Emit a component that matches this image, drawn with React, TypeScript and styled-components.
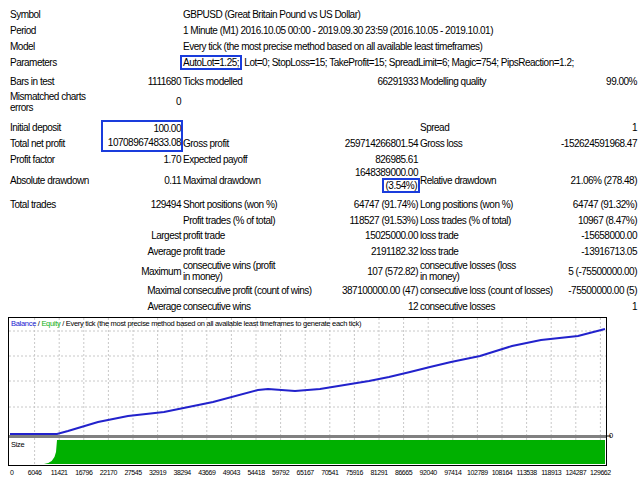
import React from 'react';
import styled, { createGlobalStyle } from 'styled-components';

const Global = createGlobalStyle`
  body { margin: 0; background: #fff; }
  * { box-sizing: border-box; }
`;

const Page = styled.div`
  width: 640px;
  height: 480px;
  overflow: hidden;
  padding: 6px 3px 0 8px;
  font-family: "Liberation Sans", Arial, sans-serif;
  font-size: 10px;
  letter-spacing: -0.5px;
  color: #000;
`;

const Grid = styled.div`
  display: grid;
  grid-template-columns: 96px 77px 96px 141px 100px 119px;
`;

const Cell = styled.div<{ $span?: number; $right?: boolean; $h?: number; $wrap?: boolean }>`
  grid-column: span ${p => p.$span ?? 1};
  height: ${p => p.$h ?? 15.5}px;
  display: flex;
  align-items: center;
  justify-content: ${p => (p.$right ? 'flex-end' : 'flex-start')};
  text-align: ${p => (p.$right ? 'right' : 'left')};
  line-height: 11px;
  white-space: ${p => (p.$wrap ? 'normal' : 'nowrap')};
  padding-left: ${p => (p.$right ? 0 : 2)}px;
`;

const Gap = styled.div<{ $h: number }>`
  grid-column: span 6;
  height: ${p => p.$h}px;
`;

const Boxed = styled.span`
  border: 2px solid #1a3cdc;
  padding: 0 1px;
  margin-left: -3px;
`;

const DepositBox = styled.div`
  grid-row: span 2;
  border: 2px solid #1a3cdc;
  margin-left: -3px;
  margin-right: -2px;
  display: flex;
  flex-direction: column;
  justify-content: center;
  align-items: flex-end;
  & > div { height: 14px; display: flex; align-items: center; }
`;

const DrawCell = styled.div`
  height: 26px;
  display: flex;
  flex-direction: column;
  align-items: flex-end;
  justify-content: flex-start;
  line-height: 11px;
`;

const Pct = styled.span`
  border: 2px solid #1a3cdc;
  padding: 0 1px;
  margin-right: -2px;
`;

const ChartWrap = styled.div`
  margin-top: 3px;
`;

const Legend = styled.text`
  font-family: "Liberation Sans", Arial, sans-serif;
  font-size: 7.5px;
  letter-spacing: -0.3px;
`;

const Axis = styled.text`
  font-family: "Liberation Sans", Arial, sans-serif;
  font-size: 7px;
  letter-spacing: -0.45px;
`;

const labels = ['0','6046','11421','16796','22170','27545','32919','38294','43669','49043','54418','59792','65167','70541','75916','81291','86665','92040','97414','102789','108164','113538','118913','124287','129662'];

const curve = [
  [2, 117], [49, 117], [60, 114], [90, 105], [120, 99], [156, 95], [205, 85], [250, 73],
  [260, 72], [287, 74], [312, 72], [361, 64], [381, 60], [402, 55], [422, 50], [443, 45],
  [472, 39], [504, 29], [533, 23], [570, 19], [597, 12],
].map(p => p.join(',')).join(' ');

function Chart() {
  const W = 598;
  const xs = labels.map((_, i) => 2 + i * 24.6);
  return (
    <ChartWrap>
      <svg width="630" height="162" viewBox="0 0 630 162">
        <rect x="0.5" y="0.5" width={W} height="148" fill="#fff" stroke="#000" />
        {xs.slice(1).map(x => (
          <line key={x} x1={x} y1="1" x2={x} y2="118" stroke="#c8c8c8" strokeDasharray="2 2" />
        ))}
        {[14, 39, 64, 90].map(y => (
          <line key={y} x1="1" y1={y} x2={W} y2={y} stroke="#c8c8c8" strokeDasharray="2 2" />
        ))}
        <Legend x="3" y="9">
          <tspan fill="#2020d0">Balance</tspan>
          <tspan fill="#000"> / </tspan>
          <tspan fill="#10b010">Equity</tspan>
          <tspan fill="#000"> / Every tick (the most precise method based on all available least timeframes to generate each tick)</tspan>
        </Legend>
        <polyline points={curve} fill="none" stroke="#2222cc" strokeWidth="2" />
        <rect x="1" y="118" width={W - 1} height="3" fill="#808080" />
        <line x1={W} y1="119" x2={W + 5} y2="119" stroke="#000" />
        <Legend x={W + 3} y="121">0</Legend>
        {xs.slice(1).map(x => (
          <line key={'s' + x} x1={x} y1="121" x2={x} y2="148" stroke="#c8c8c8" strokeDasharray="2 2" />
        ))}
        <Legend x="3" y="130">Size</Legend>
        <path d="M36 147 Q46 146 48 135 L49 123 L597 123 L597 147 Z" fill="#00b000" />
        {labels.map((l, i) => (
          <Axis key={l} x={xs[i]} y="158" textAnchor={i === 0 ? 'start' : 'middle'}>{l}</Axis>
        ))}
      </svg>
    </ChartWrap>
  );
}

export default function App() {
  return (
    <Page>
      <Global />
      <Grid>
        <Cell $span={2} $h={16}>Symbol</Cell>
        <Cell $span={4} $h={16}>GBPUSD (Great Britain Pound vs US Dollar)</Cell>
        <Cell $span={2} $h={16}>Period</Cell>
        <Cell $span={4} $h={16}>1 Minute (M1) 2016.10.05 00:00 - 2019.09.30 23:59 (2016.10.05 - 2019.10.01)</Cell>
        <Cell $span={2} $h={16}>Model</Cell>
        <Cell $span={4} $h={16}>Every tick (the most precise method based on all available least timeframes)</Cell>
        <Cell $span={2} $h={16}>Parameters</Cell>
        <Cell $span={4} $h={16}><Boxed>AutoLot=1.25;</Boxed>&nbsp;Lot=0; StopLoss=15; TakeProfit=15; SpreadLimit=6; Magic=754; PipsReaction=1.2;</Cell>
        <Gap $h={4} />
        <Cell>Bars in test</Cell><Cell $right>1111680</Cell>
        <Cell>Ticks modelled</Cell><Cell $right>66291933</Cell>
        <Cell>Modelling quality</Cell><Cell $right>99.00%</Cell>
        <Cell $h={24} $wrap>Mismatched charts errors</Cell><Cell $right $h={24}>0</Cell>
        <Cell $span={4} $h={24} />
        <Gap $h={6} />
        <Cell>Initial deposit</Cell>
        <DepositBox><div>100.00</div><div>107089674833.08</div></DepositBox>
        <Cell /><Cell />
        <Cell>Spread</Cell><Cell $right>1</Cell>
        <Cell>Total net profit</Cell>
        <Cell>Gross profit</Cell><Cell $right>259714266801.54</Cell>
        <Cell>Gross loss</Cell><Cell $right>-152624591968.47</Cell>
        <Cell>Profit factor</Cell><Cell $right>1.70</Cell>
        <Cell>Expected payoff</Cell><Cell $right>826985.61</Cell>
        <Cell /><Cell />
        <Cell $h={26}>Absolute drawdown</Cell><Cell $right $h={26}>0.11</Cell>
        <Cell $h={26}>Maximal drawdown</Cell>
        <DrawCell><span>1648389000.00</span><Pct>(3.54%)</Pct></DrawCell>
        <Cell $h={26}>Relative drawdown</Cell><Cell $right $h={26}>21.06% (278.48)</Cell>
        <Gap $h={4} />
        <Cell>Total trades</Cell><Cell $right>129494</Cell>
        <Cell>Short positions (won %)</Cell><Cell $right>64747 (91.74%)</Cell>
        <Cell>Long positions (won %)</Cell><Cell $right>64747 (91.32%)</Cell>
        <Cell $span={2} />
        <Cell>Profit trades (% of total)</Cell><Cell $right>118527 (91.53%)</Cell>
        <Cell>Loss trades (% of total)</Cell><Cell $right>10967 (8.47%)</Cell>
        <Cell $span={2} $right>Largest</Cell>
        <Cell>profit trade</Cell><Cell $right>15025000.00</Cell>
        <Cell>loss trade</Cell><Cell $right>-15658000.00</Cell>
        <Cell $span={2} $right>Average</Cell>
        <Cell>profit trade</Cell><Cell $right>2191182.32</Cell>
        <Cell>loss trade</Cell><Cell $right>-13916713.05</Cell>
        <Cell $span={2} $right $h={24}>Maximum</Cell>
        <Cell $h={24} $wrap>consecutive wins (profit in money)</Cell><Cell $right $h={24}>107 (572.82)</Cell>
        <Cell $h={24} $wrap>consecutive losses (loss in money)</Cell><Cell $right $h={24}>5 (-75500000.00)</Cell>
        <Cell $span={2} $right>Maximal</Cell>
        <Cell>consecutive profit (count of wins)</Cell><Cell $right>387100000.00 (47)</Cell>
        <Cell>consecutive loss (count of losses)</Cell><Cell $right>-75500000.00 (5)</Cell>
        <Cell $span={2} $right>Average</Cell>
        <Cell>consecutive wins</Cell><Cell $right>12</Cell>
        <Cell>consecutive losses</Cell><Cell $right>1</Cell>
      </Grid>
      <Chart />
    </Page>
  );
}
